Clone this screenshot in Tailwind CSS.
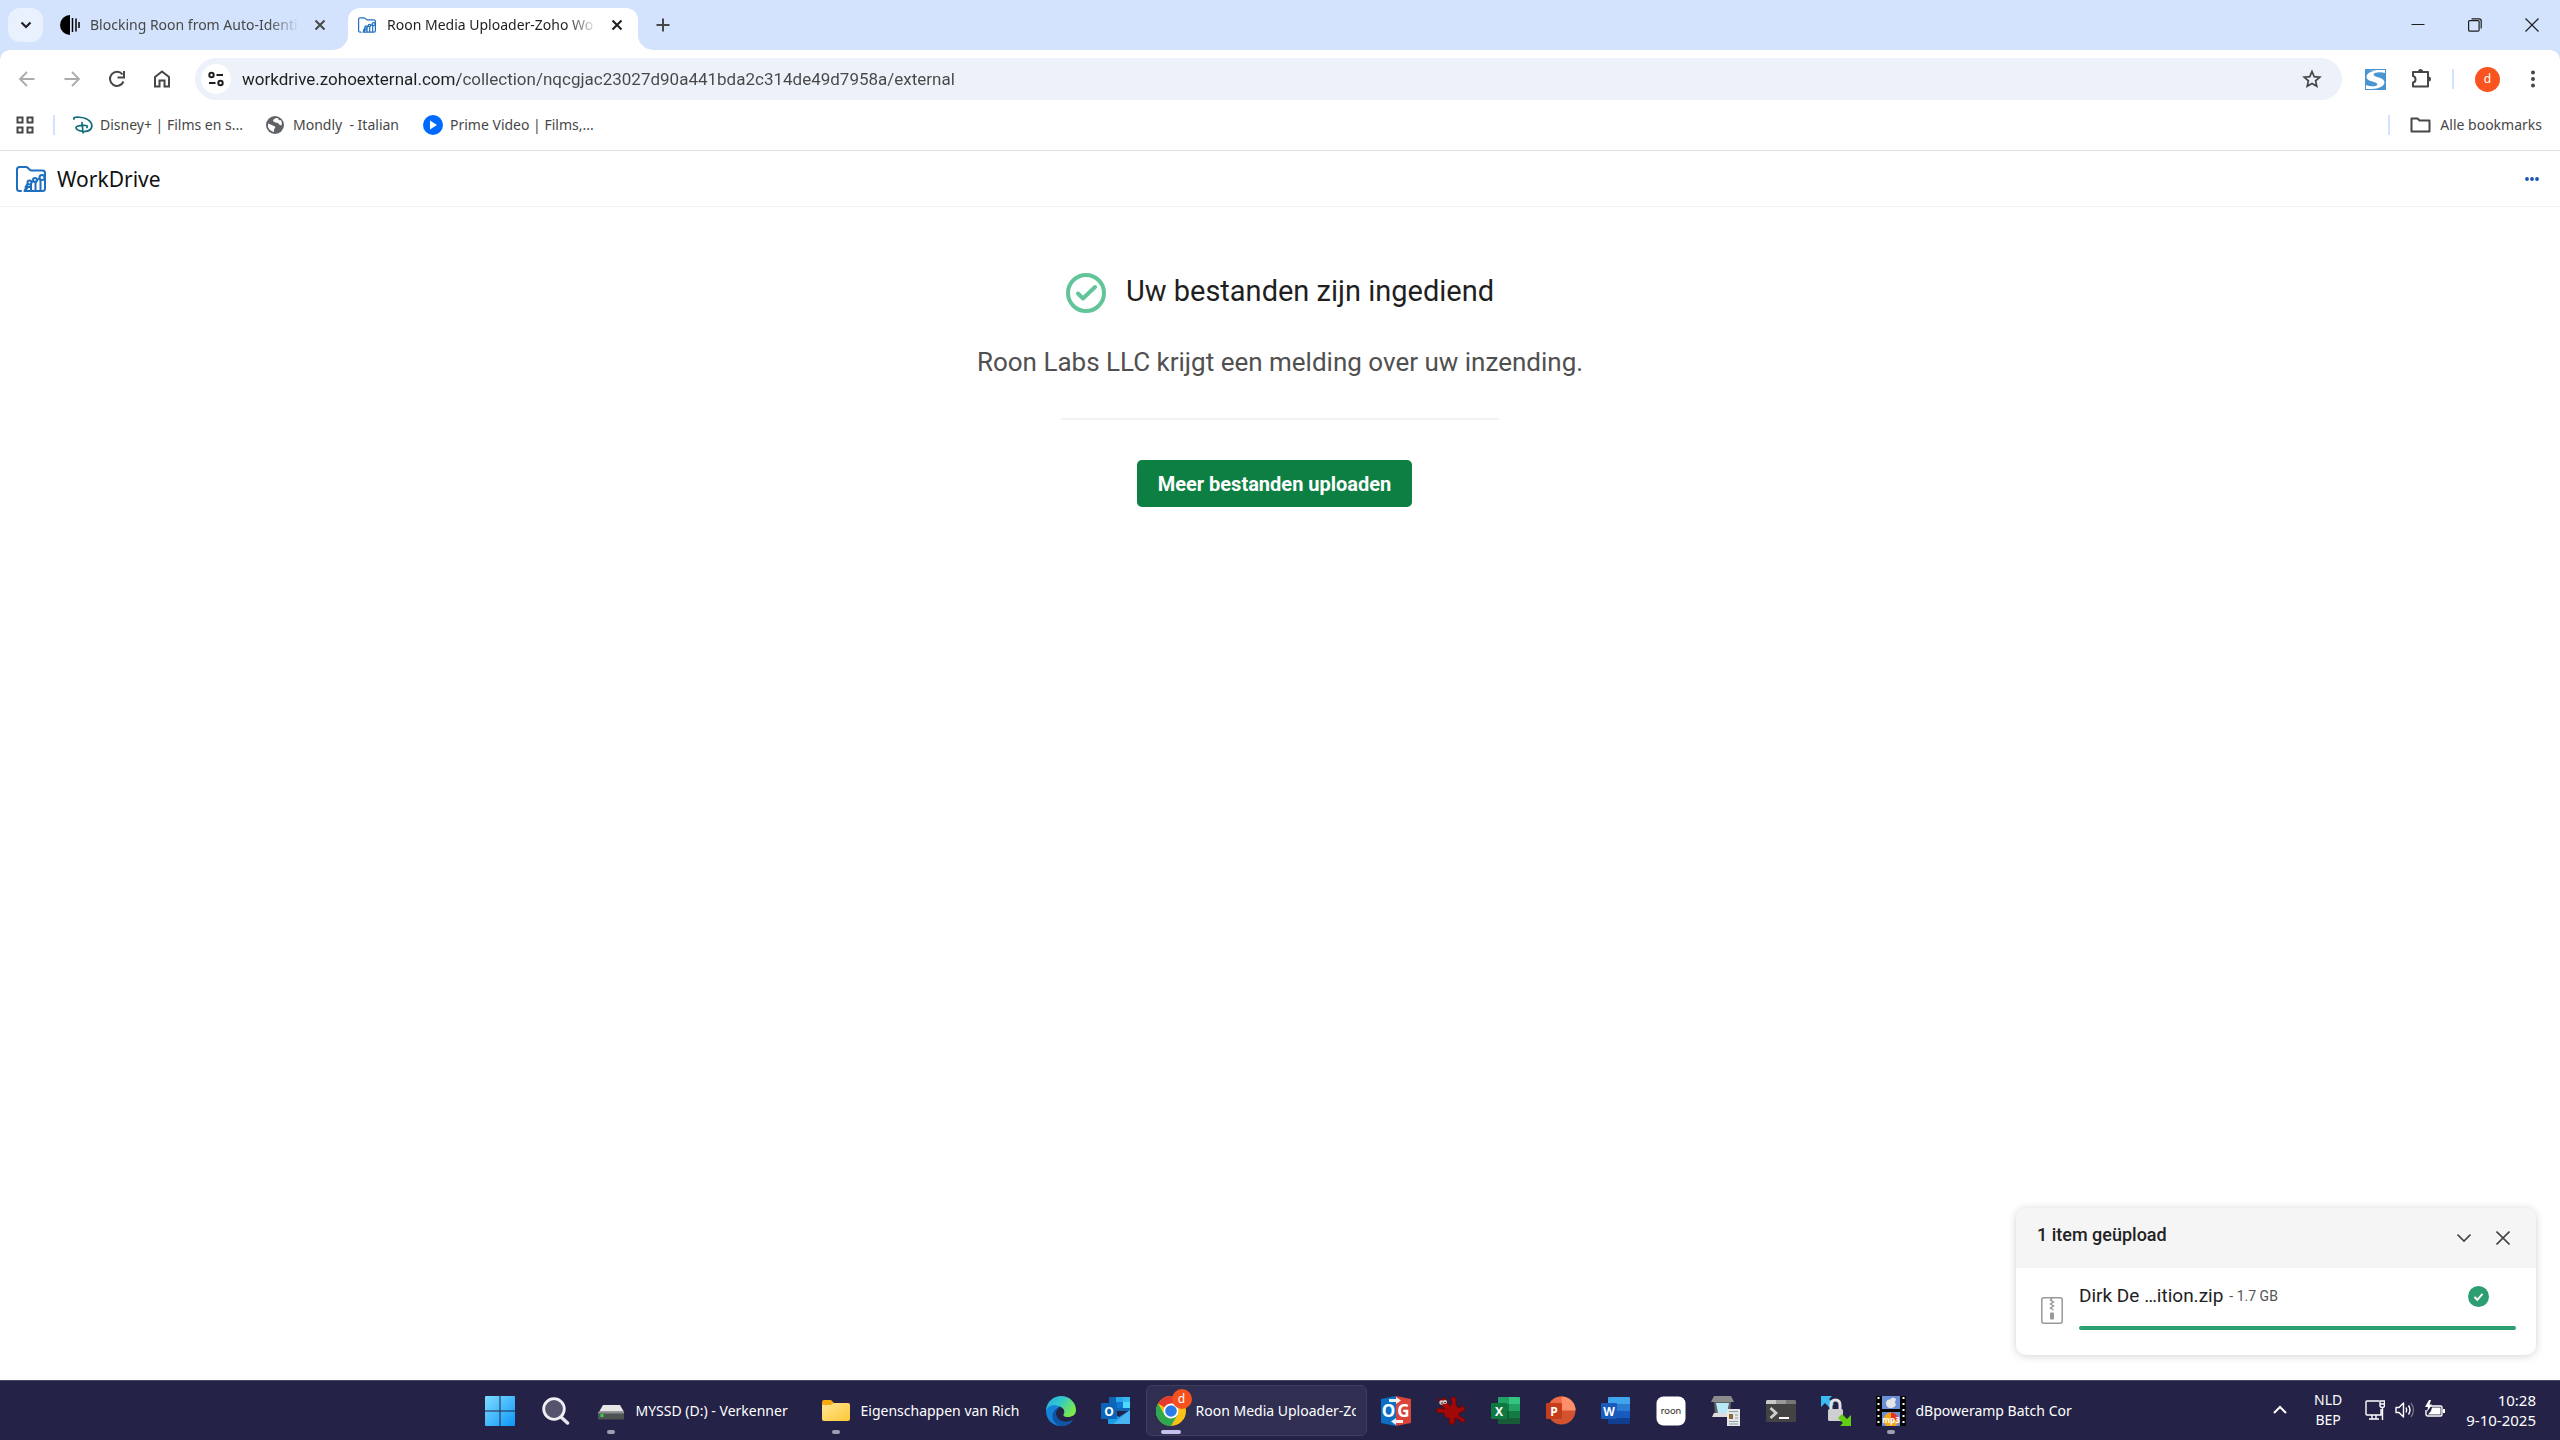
<!DOCTYPE html>
<html lang="nl">
<head>
<meta charset="utf-8">
<title>Roon Media Uploader-Zoho WorkDrive</title>
<script src="https://cdn.jsdelivr.net/npm/@tailwindcss/browser@4"></script>
</head>
<body class="flex h-screen flex-col overflow-hidden bg-white font-['Noto_Sans',sans-serif] text-sm text-[#474747]">

<svg class="hidden" aria-hidden="true">
  <symbol id="workdrive" viewBox="0 0 30 26" fill="none" stroke="#1f6fbf" stroke-width="2" stroke-linecap="round" stroke-linejoin="round">
    <path d="M5 25H3.500Q1 25 1 22.500V3.500Q1 1 3.500 1H10Q11 1 12 2L14 4Q14.500 4.500 16 4.500H26.500Q29 4.500 29 7V22.500Q29 25 26.500 25H9L12 21H15V25M8.500 25 11 20M15 25V18M19.500 25V15.500M24.500 25V14"/>
    <circle cx="13.500" cy="16.500" r="2"/><circle cx="19" cy="14" r="2"/><circle cx="26" cy="11.500" r="2.500"/>
    <path d="M11.500 18 9.500 21M15.500 16 17 15M21 14 23.500 12.500"/>
  </symbol>
  <symbol id="cross" viewBox="0 0 12 12"><path d="M1.500 1.500 10.500 10.500M10.500 1.500 1.500 10.500" fill="none" stroke="currentColor" stroke-width="2"/></symbol>
</svg>

<!-- Tab strip -->
<header class="flex h-[50px] shrink-0 items-stretch bg-[#d3e3fd]">
  <button aria-label="Tabbladen zoeken" class="mt-2 ml-2 flex h-[34px] w-[35px] items-center justify-center rounded-xl bg-[#eaf1fe] text-[#1f1f1f]">
    <svg class="size-3" viewBox="0 0 12 12" fill="none" stroke="currentColor" stroke-width="2.200"><path d="M1.500 3.500 6 8 10.500 3.500"/></svg>
  </button>
  <a href="#" class="ml-4 flex w-[289px] items-center pl-px">
    <svg class="size-5 shrink-0" viewBox="0 0 20 20"><path d="M10 0A10 10 0 0 0 10 20Z" fill="#000"/><path d="M12.500 3V17M16 3.500V16.500M19 7V13" stroke="#000" stroke-width="1.500"/></svg>
    <span class="ml-[10px] w-[210px] overflow-hidden whitespace-nowrap [mask-image:linear-gradient(to_right,black_85%,transparent)]">Blocking Roon from Auto-Identi</span>
    <svg class="ml-[14px] size-3 shrink-0"><use href="#cross"/></svg>
  </a>
  <a href="#" class="relative mt-2 flex w-[290px] items-center rounded-t-xl bg-white pb-2 pl-[10px] text-[#1f1f1f]">
    <svg class="absolute bottom-0 -left-[15px] size-[15px]" viewBox="0 0 15 15"><path d="M15 0V15H0A15 15 0 0 0 15 0Z" fill="#fff"/></svg>
    <svg class="absolute -right-[15px] bottom-0 size-[15px]" viewBox="0 0 15 15"><path d="M0 0V15H15A15 15 0 0 1 0 0Z" fill="#fff"/></svg>
    <svg class="h-4 w-[18px] shrink-0"><use href="#workdrive"/></svg>
    <span class="ml-[11px] w-[211px] overflow-hidden whitespace-nowrap [mask-image:linear-gradient(to_right,black_85%,transparent)]">Roon Media Uploader-Zoho Wo</span>
    <svg class="ml-[13px] size-3 shrink-0"><use href="#cross"/></svg>
  </a>
  <button aria-label="Nieuw tabblad" class="ml-[17px] flex w-4 items-center justify-center">
    <svg class="size-[14px] shrink-0" viewBox="0 0 14 14" stroke="#474747" stroke-width="2"><path d="M7 .500V13.500M.500 7H13.500"/></svg>
  </button>
  <div class="ml-auto flex text-[#1f1f1f]">
    <button aria-label="Minimaliseren" class="flex w-[57px] items-center justify-center"><svg class="size-[14px]" viewBox="0 0 14 14" stroke="currentColor"><path d="M.500 6.500H13.500"/></svg></button>
    <button aria-label="Verkleinen" class="flex w-[57px] items-center justify-center"><svg class="size-[14px]" viewBox="0 0 14 14" fill="none" stroke="currentColor" stroke-width="1.200"><rect x=".600" y="2.600" width="10.500" height="10.500" rx="1"/><path d="M3.500 .800H11Q13.200 .800 13.200 3V10.500"/></svg></button>
    <button aria-label="Sluiten" class="flex w-[57px] items-center justify-center"><svg class="size-[14px]" viewBox="0 0 14 14" stroke="currentColor" stroke-width="1.200"><path d="M.500 .500 13.500 13.500M13.500 .500 .500 13.500"/></svg></button>
  </div>
</header>

<!-- Toolbar and bookmarks -->
<div class="shrink-0 bg-[#d3e3fd]">
  <div class="rounded-t-[10px] border-b border-[#dfdfe1] bg-white">
    <nav class="flex h-[58px] items-center" aria-label="Navigatie">
      <div class="flex shrink-0 gap-[25px] pl-[17px]">
        <button aria-label="Vorige"><svg class="size-5" viewBox="0 0 20 20" fill="none" stroke="#ababab" stroke-width="1.800"><path d="M17.500 10H3.500M10 3 3 10 10 17"/></svg></button>
        <button aria-label="Volgende"><svg class="size-5" viewBox="0 0 20 20" fill="none" stroke="#ababab" stroke-width="1.800"><path d="M2.500 10H16.500M10 3 17 10 10 17"/></svg></button>
        <button aria-label="Vernieuwen"><svg class="size-5" viewBox="0 0 20 20" fill="none" stroke="#474747" stroke-width="2"><path d="M16.500 12.500A7 7 0 1 1 15.500 5.500"/><path d="M17 2V8.500H10.500" /></svg></button>
        <button aria-label="Startpagina"><svg class="size-5" viewBox="0 0 20 20" fill="none" stroke="#474747" stroke-width="2"><path d="M3 8 10 2.500 17 8V17.500H12.500V11.500H7.500V17.500H3Z"/></svg></button>
      </div>
      <div class="ml-[23px] flex h-[42px] min-w-0 flex-1 items-center rounded-full bg-[#ecf1fa] pr-5 pl-1.5">
        <button aria-label="Sitegegevens" class="flex size-[30px] shrink-0 items-center justify-center rounded-full bg-white">
          <svg class="size-4" viewBox="0 0 16 16" fill="none" stroke="#1f1f1f" stroke-width="2"><circle cx="3.500" cy="4" r="2.200"/><path d="M8.500 4H15M1 12H7.500"/><circle cx="12.500" cy="12" r="2.200"/></svg>
        </button>
        <input aria-label="Adres" value="workdrive.zohoexternal.com/collection/nqcgjac23027d90a441bda2c314de49d7958a/external" class="ml-[11px] min-w-0 flex-1 bg-linear-to-r from-[#1f1f1f] from-[217px] to-[#474747] to-[217px] bg-clip-text font-[Roboto,sans-serif] text-[17px] text-transparent outline-none">
        <button aria-label="Bookmark toevoegen"><svg class="size-5" viewBox="0 0 20 20" fill="none" stroke="#474747" stroke-width="1.700"><path d="M10 2.500 12.200 7.700 17.800 8.200 13.600 11.900 14.800 17.300 10 14.500 5.200 17.300 6.400 11.900 2.200 8.200 7.800 7.700Z"/></svg></button>
      </div>
      <div class="flex shrink-0 items-center pr-[17px] pl-[23px]">
        <button aria-label="Extensie S"><svg class="size-[21px]" viewBox="0 0 21 21"><rect width="21" height="21" fill="#4a94cf"/><path d="M1 1H20V4C16 2.800 9 3 8.500 5.500C8.500 8.500 19.500 8 19.500 13.500C19 18.500 11 20.500 1 20V16C5 17.500 12 18 12.500 15.500C12 12 1.500 13 1.500 8C2 4 6 2 12 1.500Z" fill="#fff"/></svg></button>
        <button aria-label="Extensies" class="ml-6"><svg class="size-[22px]" viewBox="0 0 22 22" fill="none" stroke="#474747" stroke-width="2"><path d="M3 4H18V18.500H3V14.500Q5.500 14 5.500 11.500Q5.500 8.500 3 8Z" stroke-linejoin="round"/><path d="M8 3.500A2.500 2.500 0 0 1 13 3.500ZM18.500 8.500A2.500 2.500 0 0 1 18.500 13.500Z" fill="#474747" stroke="none"/></svg></button>
        <span class="ml-5 h-5 w-0.5 bg-[#d3e3fd]"></span>
        <button aria-label="Profiel" class="ml-[21px] flex size-[25px] items-center justify-center rounded-full bg-[#f9531f] text-xs text-white">d</button>
        <button aria-label="Menu" class="ml-[23px]"><svg class="size-5" viewBox="0 0 20 20" fill="#474747"><circle cx="10" cy="3.500" r="2"/><circle cx="10" cy="10" r="2"/><circle cx="10" cy="16.500" r="2"/></svg></button>
      </div>
    </nav>
    <nav class="flex h-[42px] items-center pb-2 pl-4 pr-[18px]" aria-label="Bookmarks">
      <button aria-label="Apps"><svg class="size-[18px]" viewBox="0 0 18 18" fill="none" stroke="#474747" stroke-width="2"><path d="M1.500 1.500H6.500V6.500H1.500ZM11.500 1.500H16.500V6.500H11.500ZM1.500 11.500H6.500V16.500H1.500ZM11.500 11.500H16.500V16.500H11.500Z"/></svg></button>
      <span class="ml-[19px] h-5 w-0.5 bg-[#d3e3fd]"></span>
      <a href="#" class="ml-[18px] flex w-[193px] items-center gap-[7px] whitespace-nowrap">
        <svg class="size-5" viewBox="0 0 20 20" fill="none" stroke="#116d7c" stroke-width="1.700" stroke-linecap="round"><path d="M1 4Q0 2 5 2Q18 3 19 11Q18 17 10 16.500Q3 15.500 3 12.500Q4 10 13 10.500Q15 11 14 12.500M9 7.500 10 18"/></svg>Disney+ | Films en s...</a>
      <a href="#" class="flex w-[157px] items-center gap-[9px] whitespace-pre"><svg class="size-[18px]" viewBox="0 0 18 18"><circle cx="9" cy="9" r="9" fill="#5f6368"/><path d="M2 7.500Q6 9 9 10.500Q10 12 8 13V16Q3.500 15 2 11ZM10 2Q7 3 7 5Q9 7 12 7Q13 9 15.500 9.500Q16.500 6 14.500 4Q12 5 12.500 2.500Z" fill="#fff"/></svg>Mondly  - Italian</a>
      <a href="#" class="flex items-center gap-[7px] whitespace-nowrap"><svg class="size-5" viewBox="0 0 20 20"><circle cx="10" cy="10" r="10" fill="#006aff"/><path d="M7 5.500 14 10 7 14.500Z" fill="#fff"/></svg>Prime Video | Films,...</a>
      <span class="ml-auto h-5 w-0.5 bg-[#d3e3fd]"></span>
      <a href="#" class="ml-5 flex items-center gap-[9px]"><svg class="h-4 w-[21px]" viewBox="0 0 21 16" fill="none" stroke="#474747" stroke-width="2" stroke-linejoin="round"><path d="M1.500 14.500V1.500H7.500L9.500 3.500H19.500V14.500Z"/></svg>Alle bookmarks</a>
    </nav>
  </div>
</div>

<!-- WorkDrive page -->
<main class="relative flex min-h-0 flex-1 flex-col font-[Roboto,sans-serif]">
  <div class="flex h-14 shrink-0 items-center justify-between border-b border-[#f1f1f1] pr-[21px] pl-4">
    <a href="#" class="flex items-center gap-[11px] font-['Noto_Sans',sans-serif] text-[21px] text-[#111]"><svg class="h-[26px] w-[30px]"><use href="#workdrive"/></svg>WorkDrive</a>
    <button aria-label="Meer opties"><svg class="h-1 w-[14px]" viewBox="0 0 14 4" fill="#1b53b3"><circle cx="2" cy="2" r="1.900"/><circle cx="7" cy="2" r="1.900"/><circle cx="12" cy="2" r="1.900"/></svg></button>
  </div>
  <section class="flex flex-col items-center pt-16">
    <div class="flex items-start gap-5">
      <svg class="mt-0.5 size-10" viewBox="0 0 40 40" fill="none" stroke="#61c599" stroke-width="4"><circle cx="20" cy="20" r="18"/><path d="M12 20.500 17 25.500 29 14" stroke-linecap="round" stroke-linejoin="round"/></svg>
      <h1 class="text-[29px] leading-10 text-[#1f1f1f]">Uw bestanden zijn ingediend</h1>
    </div>
    <p class="mt-[29px] text-[26px] leading-10 text-[#505050]">Roon Labs LLC krijgt een melding over uw inzending.</p>
    <hr class="mt-9 w-[438px] border-t-2 border-[#f2f2f2]">
    <button class="mt-10 mr-[11px] h-[47px] w-[275px] rounded-[5px] bg-[#0d7f43] text-xl font-bold text-white">Meer bestanden uploaden</button>
  </section>

  <!-- Upload status -->
  <aside class="absolute right-6 bottom-[25px] h-[147px] w-[520px] overflow-hidden rounded-[10px] bg-white shadow-[0_1px_8px_rgba(0,0,0,0.18)]">
    <div class="flex h-[60px] items-center bg-[#f5f5f5] pr-[26px] pl-[21px]">
      <h2 class="mb-1.5 flex-1 text-lg leading-6 font-medium text-[#222]">1 item geüpload</h2>
      <button aria-label="Inklappen" class="mr-[25px]"><svg class="size-[14px]" viewBox="0 0 14 14" fill="none" stroke="#444" stroke-width="1.600"><path d="M.500 3.500 7 10 13.500 3.500"/></svg></button>
      <button aria-label="Sluiten"><svg class="size-[14px]" viewBox="0 0 14 14" stroke="#444" stroke-width="1.600"><path d="M.500 .500 13.500 13.500M13.500 .500 .500 13.500"/></svg></button>
    </div>
    <div class="flex pr-5 pl-[25px]">
      <svg class="mt-[29px] h-[27px] w-[22px] shrink-0" viewBox="0 0 22 27" fill="none" stroke="#999" stroke-width="1.500"><rect x=".800" y=".800" width="20.400" height="25.400" rx="2"/><path d="M11 1 9.500 3 12.500 5 9.500 7 12.500 9 9.500 11 12.500 13"/><rect x="9" y="15.500" width="4" height="7" rx="1" fill="#999" stroke="none"/></svg>
      <div class="ml-4 flex-1 pt-4">
        <div class="flex items-center pr-[27px]">
          <span class="text-[19px] leading-6 text-[#222]">Dirk De …ition.zip</span>
          <span class="ml-[6px] flex-1 text-sm text-[#555]">- 1.7 GB</span>
          <svg class="size-[21px]" viewBox="0 0 21 21" fill="none"><circle cx="10.500" cy="10.500" r="10.500" fill="#2d9d72"/><path d="M6.500 11 9.300 13.800 14.500 7.800" stroke="#fff" stroke-width="2"/></svg>
        </div>
        <div class="mt-[18px] h-1 rounded-full bg-[#2d9d72]"></div>
      </div>
    </div>
  </aside>
</main>

<!-- Taskbar -->
<footer class="grid h-[60px] shrink-0 grid-cols-[1fr_auto_1fr] border-t border-[#474763] bg-[#242347] text-white">
  <div></div>
  <div class="flex items-stretch">
    <button aria-label="Start" class="flex w-[57px] items-center justify-center"><svg class="size-[30px]" viewBox="0 0 30 30"><defs><linearGradient id="win" x1="0" y1="0" x2="1" y2="1"><stop stop-color="#7fdcff"/><stop offset="1" stop-color="#0c96f8"/></linearGradient></defs><path d="M0 1Q0 0 1 0H14.500V14.500H0ZM15.500 0H29Q30 0 30 1V14.500H15.500ZM0 15.500H14.500V30H1Q0 30 0 29ZM15.500 15.500H30V29Q30 30 29 30H15.500Z" fill="url(#win)"/></svg></button>
    <button aria-label="Zoeken" class="flex w-[55px] items-center justify-center"><svg class="size-7" viewBox="0 0 28 28"><path d="M19 20 25.500 26" stroke="#e4e4ea" stroke-width="3.500" stroke-linecap="round"/><circle cx="12" cy="12" r="10.300" fill="#55546f" stroke="#f0f0f4" stroke-width="2.800"/></svg></button>
    <button class="relative flex w-[225px] items-center gap-[10px] pl-3">
      <svg class="size-[30px] shrink-0" viewBox="0 0 30 30"><path d="M7 9H24L28 16H3Z" fill="#e6e6e6"/><rect x="2" y="15.500" width="26" height="8" rx="1" fill="#4d5352"/><path d="M2 16H28V17.500H2Z" fill="#8c8f8f"/><rect x="4.500" y="18" width="3" height="3" fill="#36d53c"/></svg>
      <span class="w-[160px] overflow-hidden text-left whitespace-nowrap">MYSSD (D:) - Verkenner</span>
      <span class="absolute bottom-[6px] left-[23px] h-1 w-2 rounded-full bg-[#9e9db4]"></span>
    </button>
    <button class="relative flex w-[225px] items-center gap-[10px] pl-3">
      <svg class="size-[30px] shrink-0" viewBox="0 0 30 30"><defs><linearGradient id="fold" x1="0" y1="0" x2="1" y2="1"><stop stop-color="#ffe596"/><stop offset="1" stop-color="#fdc836"/></linearGradient></defs><path d="M1 6Q1 4 3 4H10L13 7V10H1Z" fill="#f5ab12"/><path d="M1 9H10L13 7H27Q29 7 29 9V23Q29 25 27 25H3Q1 25 1 23Z" fill="url(#fold)"/></svg>
      <span class="w-[160px] overflow-hidden text-left whitespace-nowrap">Eigenschappen van Rich</span>
      <span class="absolute bottom-[6px] left-[23px] h-1 w-2 rounded-full bg-[#9e9db4]"></span>
    </button>
    <button aria-label="Edge" class="flex w-[55px] items-center justify-center"><svg class="size-[30px]" viewBox="0 0 30 30"><defs><linearGradient id="ed" x1="0" y1="0" x2="1" y2=".500"><stop stop-color="#25a9e8"/><stop offset=".500" stop-color="#32c9c9"/><stop offset="1" stop-color="#7bea4c"/></linearGradient></defs><path d="M0 14C1 5 8 0 15 0C24 0 30 7 30 14C30 19 26 21 22 21C18 21 16.500 19.500 18 17.500C19.500 14 16 10 11 10C6 10 2 13 0 17Z" fill="url(#ed)"/><path d="M0 15C2 9 9 8 14 11C10 12 8 18 12 23C16 27 23 27 27 24C24 28 20 30 15 30C6 30 0 23 0 15Z" fill="#1681d9"/><path d="M13.500 11.500C9 14 9 20 12.500 23.500C17 27 24 26 27.500 23C24 28.500 19 30.500 14 30C8 28 5 22 7 17C8 14 11 11.500 13.500 11.500Z" fill="#0c56a4"/></svg></button>
    <button aria-label="Outlook" class="flex w-[55px] items-center justify-center"><svg class="size-[30px]" viewBox="0 0 30 30"><rect x="8" y="1" width="21" height="14" rx="1" fill="#1066b5"/><path d="M15 1H22V6H15Z" fill="#28a8ea"/><path d="M22 1H29V6H22Z" fill="#35b8f1"/><path d="M22 6H29V12H22Z" fill="#50d9ff"/><path d="M15 6H22V12H15Z" fill="#0f78d4"/><path d="M7 14 18 21 29 14V27Q29 28 28 28H8Q7 28 7 27Z" fill="#1a9be5"/><path d="M29 14 12 28H28Q29 28 29 27Z" fill="#48b4f0"/><rect y="7" width="16" height="16" rx="1" fill="#0b64b8"/><text x="8" y="19.500" text-anchor="middle" font-family="Open Sans" font-size="12" font-weight="700" fill="#fff">O</text></svg></button>
    <button class="relative flex w-[225px] items-center gap-[10px] pl-3">
      <span class="absolute top-1 right-0.5 bottom-1 left-0.5 rounded-md border border-[#403f5f] bg-[#302f52]"></span>
      <svg class="relative size-[30px] shrink-0" viewBox="0 0 30 30"><circle cx="15" cy="15" r="15" fill="#fbc116"/><path d="M15 15 2 7.500A15 15 0 0 1 28 7.500H15Z" fill="#e33b2e"/><path d="M2 7.500A15 15 0 0 0 15 30L21.500 18.750 15 15 8.500 18.750Z" fill="#2da94f"/><circle cx="15" cy="15" r="7.500" fill="#fff"/><circle cx="15" cy="15" r="5.800" fill="#2a7de9"/></svg>
      <span class="absolute top-[8px] left-[28px] flex size-5 items-center justify-center rounded-full bg-[#f4511e] text-xs text-white">d</span>
      <span class="relative w-[160px] overflow-hidden text-left whitespace-nowrap">Roon Media Uploader-Zo</span>
      <span class="absolute bottom-[6px] left-[17px] h-1 w-5 rounded-full bg-[#c5c0ec]"></span>
    </button>
    <button aria-label="OG" class="flex w-[55px] items-center justify-center"><svg class="size-[30px]" viewBox="0 0 30 30"><path d="M0 3 15 0V30L0 27Z" fill="#0b6fc6"/><path d="M15 0 30 3V27L15 30Z" fill="#d9453a"/><text x="7.500" y="21" text-anchor="middle" font-family="Open Sans" font-size="17" font-weight="700" fill="#fff">O</text><text x="22.500" y="21" text-anchor="middle" font-family="Open Sans" font-size="17" font-weight="700" fill="#fff">G</text><path d="M8 3H15V1L20 4.500 15 8V6H8ZM22 24H15V22L10 25.500 15 29V27H22Z" fill="#fff" opacity=".900"/></svg></button>
    <button aria-label="IrfanView" class="flex w-[55px] items-center justify-center"><svg class="size-[30px]" viewBox="0 0 30 30"><path d="M2 2 5 4 9 1 11 6 14 10 16 8 15 3Q17 -1 20 2L20 8 22 12 27 10Q30 12 28 15L23 17 23 20 27 22Q30 23 28 26Q25 28 24 24L19 22 19 27 14 29 13 22 9 21 8 17 2 17Q-1 14 2 12L9 13 5 9Z" fill="#a30808" stroke="#5e0606" stroke-width=".800"/><circle cx="5.500" cy="6.500" r="2.200" fill="#d9c9c9"/><circle cx="9" cy="6" r="2" fill="#e6dada"/><circle cx="6" cy="7" r=".800"/><circle cx="9" cy="6.500" r=".800"/></svg></button>
    <button aria-label="Excel" class="flex w-[55px] items-center justify-center"><svg class="size-[30px]" viewBox="0 0 30 30"><path d="M7 2Q7 1 8 1H18V8H7Z" fill="#21a366"/><path d="M18 1H28Q29 1 29 2V8H18Z" fill="#33c481"/><path d="M7 8H18V15H7Z" fill="#107c41"/><path d="M18 8H29V15H18Z" fill="#21a366"/><path d="M7 15H18V22H7Z" fill="#185c37"/><path d="M18 15H29V22H18Z" fill="#107c41"/><path d="M7 22H29V27Q29 28 28 28H8Q7 28 7 27Z" fill="#185c37"/><rect y="7" width="16" height="16" rx="1" fill="#0f7a3f"/><text x="8" y="19.500" text-anchor="middle" font-family="Open Sans" font-size="12" font-weight="700" fill="#fff">X</text></svg></button>
    <button aria-label="PowerPoint" class="flex w-[55px] items-center justify-center"><svg class="size-[30px]" viewBox="0 0 30 30"><circle cx="15.500" cy="14.500" r="14" fill="#d35230"/><path d="M15.500 14.500H1.500A14 14 0 0 1 15.500 .500Z" fill="#ed6c47"/><path d="M15.500 .500A14 14 0 0 1 29.500 14.500H15.500Z" fill="#ff8f6b"/><rect y="7" width="16" height="16" rx="1" fill="#c43e1c"/><text x="8" y="19.500" text-anchor="middle" font-family="Open Sans" font-size="12" font-weight="700" fill="#fff">P</text></svg></button>
    <button aria-label="Word" class="flex w-[55px] items-center justify-center"><svg class="size-[30px]" viewBox="0 0 30 30"><path d="M7 2Q7 1 8 1H28Q29 1 29 2V8H7Z" fill="#41a5ee"/><path d="M7 8H29V15H7Z" fill="#2b7cd3"/><path d="M7 15H29V22H7Z" fill="#185abd"/><path d="M7 22H29V27Q29 28 28 28H8Q7 28 7 27Z" fill="#103f91"/><rect y="7" width="16" height="16" rx="1" fill="#185abd"/><text x="8" y="19.500" text-anchor="middle" font-family="Open Sans" font-size="12" font-weight="700" fill="#fff">W</text></svg></button>
    <button aria-label="Roon" class="flex w-[55px] items-center justify-center"><svg class="size-[30px]" viewBox="0 0 30 30"><rect width="29" height="29" x=".500" y=".500" rx="7" fill="#fff"/><text x="15" y="18" text-anchor="middle" font-family="Lato" font-size="10" fill="#333">roon</text></svg></button>
    <button aria-label="Scanner" class="flex w-[55px] items-center justify-center"><svg class="size-[30px]" viewBox="0 0 30 30"><path d="M3 0H20L23 6H0Z" fill="#8c8c8c"/><path d="M3 6H20L19 19H4Z" fill="#5d6468"/><path d="M5 7H18L16 17H7Z" fill="#b8e9f6"/><path d="M3 17H20L22 21H1Z" fill="#dcdcdc"/><rect x="16" y="13" width="13" height="17" fill="#e6e6e6"/><rect x="18" y="18" width="4" height="5" fill="#8a6a35"/><path d="M18 15.500H27M24 19H27M24 22H27M18 25.500H27M18 28H27" stroke="#86a0b0"/></svg></button>
    <button aria-label="Terminal" class="flex w-[55px] items-center justify-center"><svg class="size-[30px]" viewBox="0 0 30 30"><rect y="4" width="30" height="22" rx="1.500" fill="#434343"/><path d="M0 8V5.500Q0 4 1.500 4H20V8Z" fill="#c9c9c9"/><path d="M10 4H20V8H10Z" fill="#9a9a9a"/><path d="M20 4H28.500Q30 4 30 5.500V8H20Z" fill="#777"/><path d="M4.500 12 10 17 4.500 22" fill="none" stroke="#d0d0d0" stroke-width="2.800"/><path d="M13 22H23" stroke="#fff" stroke-width="2"/></svg></button>
    <button aria-label="WinSCP" class="flex w-[55px] items-center justify-center"><svg class="size-[30px]" viewBox="0 0 30 30"><path d="M0 0H11L8 3 13 8 9 12 4 7 0 11Z" fill="#3bbcf0"/><path d="M10 14V9Q10 4 14.500 4Q19 4 19 9V14" fill="none" stroke="#e1e1e1" stroke-width="3"/><rect x="7" y="13" width="15" height="12" rx="1.500" fill="#cfcfcf"/><path d="M30 30H19L22 27 17 22 21 18 26 23 30 19Z" fill="#62cf14"/></svg></button>
    <button class="relative flex w-[225px] items-center gap-[10px] pl-3">
      <svg class="size-[30px] shrink-0" viewBox="0 0 30 30"><rect width="30" height="30" fill="#050505"/><path d="M2.500 1V30M27.500 1V30" stroke="#fff" stroke-width="2" stroke-dasharray="2 4"/><rect x="6" width="18" height="13" fill="#6a8fd6"/><rect x="6" y="16" width="18" height="14" fill="#6a8fd6"/><path d="M15.500 2Q20 1 20 4Q18 6 20 9Q18 12.500 15 12Q11 12.500 10 8Q10 3 14 3.500Z" fill="#e4e4e4"/><circle cx="15" cy="24" r="7.500" fill="#f9a51b"/><path d="M15 24V16.500A7.500 7.500 0 0 1 22.500 24Z" fill="#e23420"/><text x="15" y="27" text-anchor="middle" font-family="Open Sans" font-size="8" font-weight="700" fill="#fff">mp3</text></svg>
      <span class="w-[160px] overflow-hidden text-left whitespace-nowrap">dBpoweramp Batch Cor</span>
      <span class="absolute bottom-[6px] left-[23px] h-1 w-2 rounded-full bg-[#9e9db4]"></span>
    </button>
  </div>
  <div class="flex items-center justify-end pr-6 pb-px leading-5">
    <button aria-label="Verborgen pictogrammen" class="mr-[27px]"><svg class="size-[14px]" viewBox="0 0 14 14" fill="none" stroke="#fff" stroke-width="2"><path d="M1 10 7 4 13 10"/></svg></button>
    <button class="mr-[23px] text-center">NLD<br>BEP</button>
    <button aria-label="Netwerk, volume en batterij" class="mr-[21px] flex items-center gap-[10px]">
      <svg class="size-5" viewBox="0 0 20 20" fill="none" stroke="#fff" stroke-width="1.400"><path d="M14 1H2Q1 1 1 2V14Q1 15 2 15H16V9M7 15V18.500M11 15V18.500M4 19H14M17.500 8V20M15 1H19.500V5.500Q19.500 7.500 17.500 7.500Q15 7.500 15 5.500ZM15 4H19.500"/></svg>
      <svg class="size-5" viewBox="0 0 20 20" fill="none" stroke="#fff" stroke-width="1.400" stroke-linejoin="round"><path d="M1 7.500H4L8.500 3V17L4 12.500H1Z"/><path d="M11 7.500Q12.500 10 11 12.500M13.500 5.500Q16.500 10 13.500 14.500"/><path d="M16 3Q21 10 16 17" opacity=".350"/></svg>
      <svg class="size-5" viewBox="0 0 20 20"><path d="M4 6H15.500Q17 6 17 7.500V14.500Q17 16 15.500 16H3Q1 16 1 14V10" fill="none" stroke="#fff" stroke-width="1.400"/><path d="M7 7.500H15.500V14.500H3L6 11Z" fill="#fff"/><path d="M18 9H20V13H18Z" fill="#fff"/><path d="M4 0 0 7H3L2 12 7 4.500H4.500L6 0Z" fill="#fff"/></svg>
    </button>
    <button class="text-right text-[15px] leading-5">10:28<br>9-10-2025</button>
  </div>
</footer>
</body>
</html>
